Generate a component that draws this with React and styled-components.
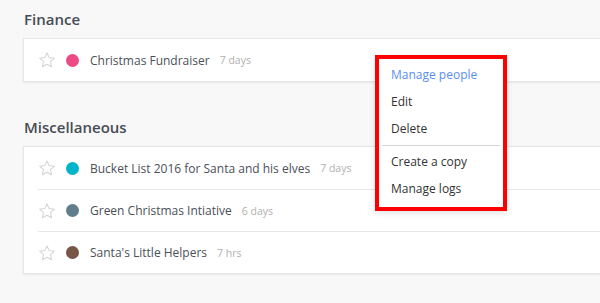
import React from "react";
import styled, { createGlobalStyle } from "styled-components";

const Global = createGlobalStyle`
  html, body { margin: 0; padding: 0; background: #f8f8f8; overflow: hidden; }
  body { font-family: "Open Sans", "Noto Sans", sans-serif; width: 600px; height: 303px; }
`;

const Page = styled.div`
  position: relative;
  width: 640px;
  padding: 9px 0 0 23px;
  box-sizing: border-box;
`;

const Section = styled.section`
  margin-bottom: 35px;
`;

const Heading = styled.h2`
  margin: 0 0 9px 1px;
  font-size: 15px;
  line-height: 20px;
  font-weight: 600;
  color: #474c54;
`;

const Card = styled.div`
  background: #fff;
  border: 1px solid #e6e6e6;
  border-right: none;
  box-shadow: 0 1px 2px rgba(0, 0, 0, 0.07);
`;

const Row = styled.div`
  display: flex;
  align-items: center;
  height: 42px;
  padding-left: 14px;
  & + & > * { border-top: 1px solid #e7e7e7; }
`;

const RowInner = styled.div`
  display: flex;
  align-items: center;
  flex: 1;
  height: 100%;
  box-sizing: border-box;
`;

const Dot = styled.span`
  width: 13px;
  height: 13px;
  border-radius: 50%;
  background: ${(p) => p.$color};
  margin: 0 11px 0 10px;
  flex-shrink: 0;
`;

const Title = styled.span`
  font-size: 12px;
  color: #4b5058;
`;

const Meta = styled.span`
  font-size: 10.5px;
  color: #b0b0b0;
  margin-left: 10px;
`;

const Menu = styled.div`
  position: absolute;
  left: 375px;
  top: 55px;
  width: 124px;
  border: 4px solid #ff0000;
  background: #fff;
  padding: 2px 0 5px;
  box-shadow: 0 2px 6px rgba(0, 0, 0, 0.12);
`;

const MenuItem = styled.div`
  height: 27px;
  line-height: 27px;
  padding-left: 12px;
  font-size: 12px;
  color: ${(p) => (p.$active ? "#5a8ff0" : "#333")};
`;

const Separator = styled.div`
  height: 1px;
  background: #d6d6d6;
  margin: 3px 3px 2px;
`;

const Star = () => (
  <svg width="18" height="18" viewBox="0 0 24 24" fill="none" stroke="#d4d4d4" strokeWidth="1.4" strokeLinejoin="round">
    <polygon points="12,2.5 14.9,8.8 21.8,9.6 16.7,14.3 18.1,21.1 12,17.7 5.9,21.1 7.3,14.3 2.2,9.6 9.1,8.8" />
  </svg>
);

const Item = ({ color, title, meta }) => (
  <Row>
    <RowInner>
      <Star />
      <Dot $color={color} />
      <Title>{title}</Title>
      <Meta>{meta}</Meta>
    </RowInner>
  </Row>
);

export default function App() {
  return (
    <Page>
      <Global />
      <Section>
        <Heading>Finance</Heading>
        <Card>
          <Item color="#ec4a83" title="Christmas Fundraiser" meta="7 days" />
        </Card>
      </Section>
      <Section>
        <Heading>Miscellaneous</Heading>
        <Card>
          <Item color="#00b4c9" title="Bucket List 2016 for Santa and his elves" meta="7 days" />
          <Item color="#607d8b" title="Green Christmas Intiative" meta="6 days" />
          <Item color="#795548" title="Santa's Little Helpers" meta="7 hrs" />
        </Card>
      </Section>
      <Menu>
        <MenuItem $active>Manage people</MenuItem>
        <MenuItem>Edit</MenuItem>
        <MenuItem>Delete</MenuItem>
        <Separator />
        <MenuItem>Create a copy</MenuItem>
        <MenuItem>Manage logs</MenuItem>
      </Menu>
    </Page>
  );
}
